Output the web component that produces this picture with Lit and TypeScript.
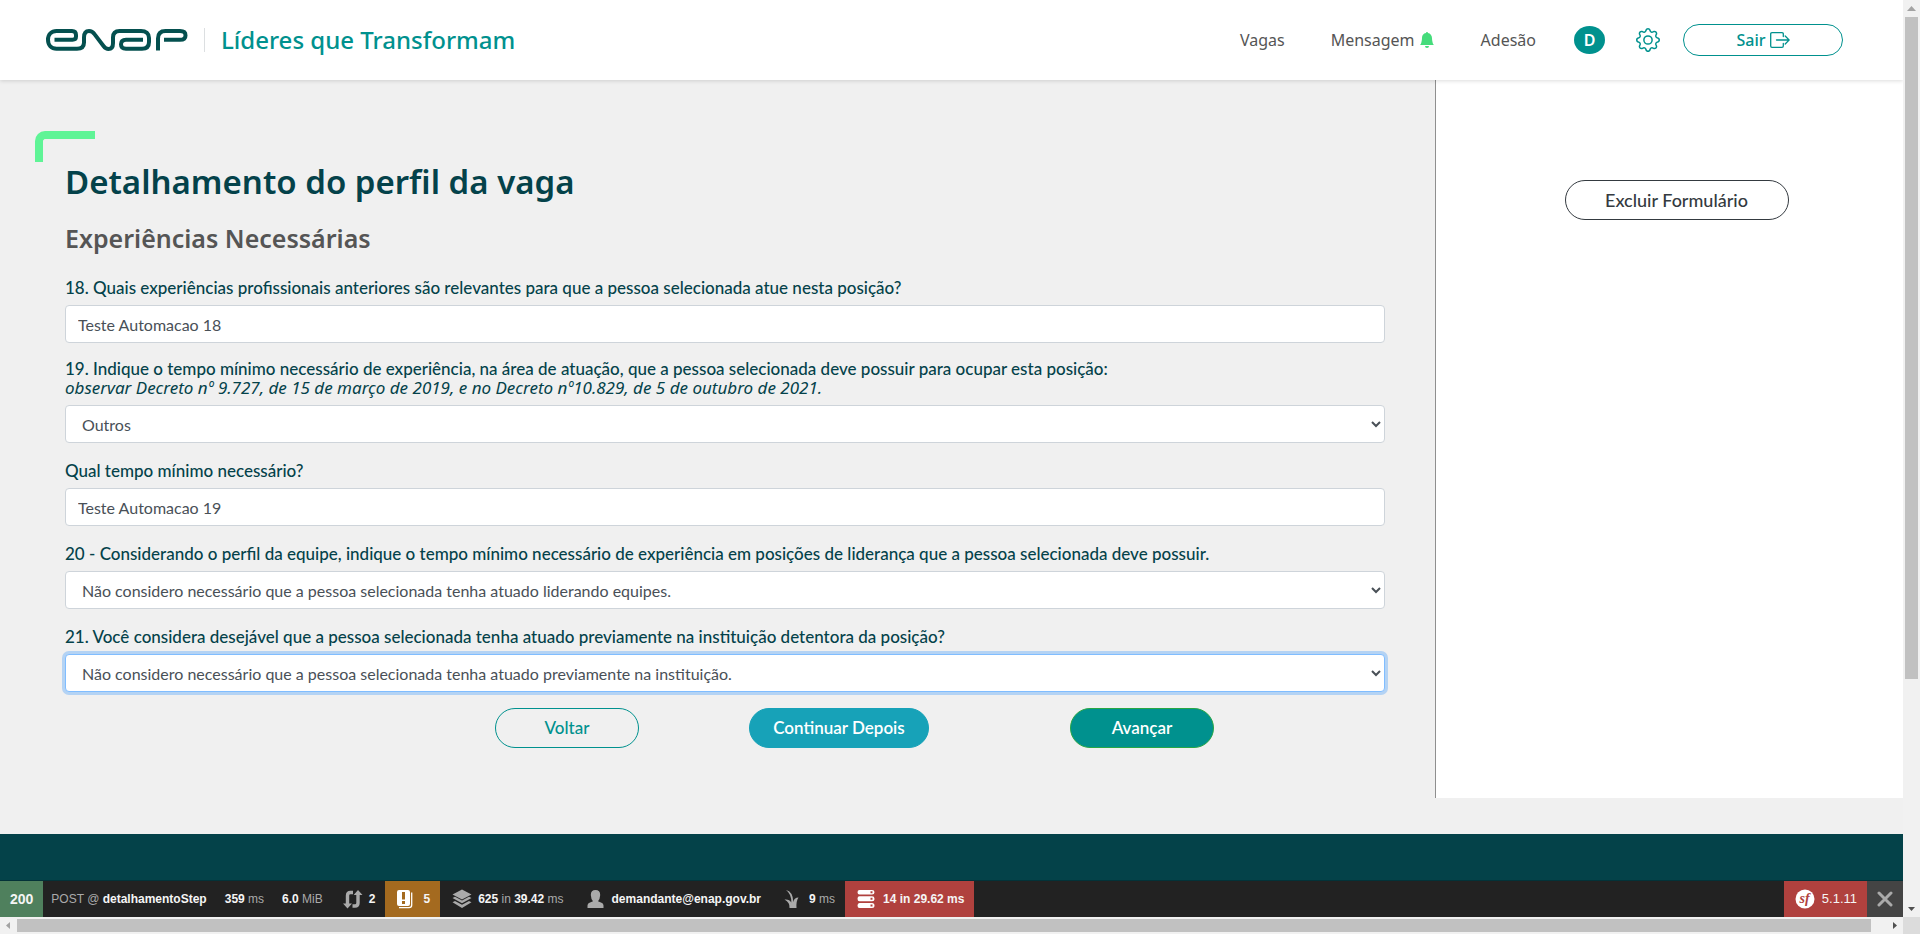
import { LitElement, html, css, svg, nothing } from "lit";
import { customElement } from "lit/decorators.js";
import { classMap } from "lit/directives/class-map.js";

interface Field {
  id: string;
  label: string;
  hint?: string;
  kind: "text" | "select";
  value: string;
  focused?: boolean;
}

const FIELDS: Field[] = [
  {
    id: "q18",
    label: "18. Quais experiências profissionais anteriores são relevantes para que a pessoa selecionada atue nesta posição?",
    kind: "text",
    value: "Teste Automacao 18",
  },
  {
    id: "q19",
    label: "19. Indique o tempo mínimo necessário de experiência, na área de atuação, que a pessoa selecionada deve possuir para ocupar esta posição:",
    hint: "observar Decreto nº 9.727, de 15 de março de 2019, e no Decreto nº10.829, de 5 de outubro de 2021.",
    kind: "select",
    value: "Outros",
  },
  { id: "q19b", label: "Qual tempo mínimo necessário?", kind: "text", value: "Teste Automacao 19" },
  {
    id: "q20",
    label: "20 - Considerando o perfil da equipe, indique o tempo mínimo necessário de experiência em posições de liderança que a pessoa selecionada deve possuir.",
    kind: "select",
    value: "Não considero necessário que a pessoa selecionada tenha atuado liderando equipes.",
  },
  {
    id: "q21",
    label: "21. Você considera desejável que a pessoa selecionada tenha atuado previamente na instituição detentora da posição?",
    kind: "select",
    value: "Não considero necessário que a pessoa selecionada tenha atuado previamente na instituição.",
    focused: true,
  },
];

@customElement("site-header")
export class SiteHeader extends LitElement {
  static styles = css`
    :host {
      display: block;
      position: relative;
      z-index: 1;
      background: #fff;
      box-shadow: 0 1px 4px rgba(0, 0, 0, 0.14);
      font-family: "Noto Sans", sans-serif;
    }
    .bar {
      display: flex;
      align-items: center;
      justify-content: space-between;
      height: 80px;
      padding: 0 60px 0 46px;
    }
    .brand,
    .nav {
      display: flex;
      align-items: center;
    }
    .brand {
      text-decoration: none;
    }
    .logo {
      display: block;
      width: 142px;
      height: 22px;
    }
    .name {
      margin-left: 16px;
      padding-left: 16px;
      border-left: 1px solid #dcdfe1;
      color: #00918e;
      font-size: 24px;
      font-weight: 500;
      line-height: 24px;
    }
    .link {
      display: flex;
      align-items: center;
      gap: 4px;
      margin-right: 46px;
      color: #555;
      font-size: 16px;
      line-height: 24px;
      text-decoration: none;
    }
    .link.last {
      margin-right: 38px;
    }
    .avatar {
      width: 31px;
      height: 28px;
      border-radius: 50%;
      background: #00918e;
      color: #fff;
      font-size: 16px;
      font-weight: 600;
      line-height: 28px;
      text-align: center;
    }
    .gear {
      display: block;
      margin: 0 23px 0 31px;
      padding: 0;
      border: 0;
      background: none;
      color: #00918e;
    }
    .icon {
      display: block;
      fill: currentColor;
    }
    .bell {
      fill: #45dc7b;
    }
    .exit {
      display: flex;
      align-items: center;
      justify-content: center;
      gap: 4px;
      width: 160px;
      height: 32px;
      padding: 0;
      border: 1px solid #00918e;
      border-radius: 16px;
      background: #fff;
      color: #00918e;
      font: 500 16px/24px "Noto Sans", sans-serif;
    }
  `;

  render() {
    return html`
      <header class="bar">
        <a class="brand" href="#">
          <svg class="logo" viewBox="0 0 142 22" fill="none" stroke="#04504f" stroke-width="4" role="img" aria-label="Enap">
            <path d="M8.500 10.700H26.500C29 10.700 30 9.500 30 7.500V6C30 3.500 28.500 2 26 2H10.500C5.500 2 2 5.500 2 10.800C2 16.200 5.500 19.700 10.500 19.700H31C35.500 19.700 38 17.500 38 13.500V8.500C38 4 40 2 43 2C45.500 2 47 3 48.500 5.200L57.500 17C59 19 60.500 20 62.500 20C65.500 20 67 18 67 14V8.500C67 4.200 69 2 73.500 2H95C100 2 103 4.500 103 9V13C103 17.500 100.500 19.700 96 19.700H80C77 19.700 75 18.200 75 15.200C75 12.200 77 10.700 80 10.700H97" />
            <path d="M112 21.500V9.500C112 4.500 114.500 2 119.500 2H134C137.500 2 139.500 3.500 139.500 6.400C139.500 9.200 137.500 10.700 134 10.700H118" />
          </svg>
          <span class="name">Líderes que Transformam</span>
        </a>
        <nav class="nav">
          <a class="link" href="#">Vagas</a>
          <a class="link" href="#">
            Mensagem
            <svg class="icon bell" width="16" height="16" viewBox="0 0 16 16" aria-hidden="true">
              <path d="M8 16a2 2 0 0 0 2-2H6a2 2 0 0 0 2 2zm.995-14.901a1 1 0 1 0-1.990 0A5.002 5.002 0 0 0 3 6c0 1.098-.5 6-2 7h14c-1.500-1-2-5.902-2-7 0-2.420-1.720-4.440-4.005-4.901z" />
            </svg>
          </a>
          <a class="link last" href="#">Adesão</a>
          <span class="avatar">D</span>
          <button class="gear" aria-label="Configurações">
            <svg class="icon" width="24" height="24" viewBox="0 0 16 16" aria-hidden="true">
              <path d="M8 4.754a3.246 3.246 0 1 0 0 6.492 3.246 3.246 0 0 0 0-6.492zM5.754 8a2.246 2.246 0 1 1 4.492 0 2.246 2.246 0 0 1-4.492 0z" />
              <path d="M9.796 1.343c-.527-1.790-3.065-1.790-3.592 0l-.094.319a.873.873 0 0 1-1.255.52l-.292-.16c-1.640-.892-3.433.902-2.540 2.541l.159.292a.873.873 0 0 1-.52 1.255l-.319.094c-1.790.527-1.790 3.065 0 3.592l.319.094a.873.873 0 0 1 .52 1.255l-.16.292c-.892 1.640.901 3.434 2.541 2.540l.292-.159a.873.873 0 0 1 1.255.52l.094.319c.527 1.790 3.065 1.790 3.592 0l.094-.319a.873.873 0 0 1 1.255-.52l.292.16c1.640.893 3.434-.902 2.540-2.541l-.159-.292a.873.873 0 0 1 .52-1.255l.319-.094c1.790-.527 1.790-3.065 0-3.592l-.319-.094a.873.873 0 0 1-.52-1.255l.16-.292c.893-1.640-.902-3.433-2.541-2.540l-.292.159a.873.873 0 0 1-1.255-.52l-.094-.319zm-2.633.283c.246-.835 1.428-.835 1.674 0l.094.319a1.873 1.873 0 0 0 2.693 1.115l.291-.16c.764-.415 1.600.42 1.184 1.185l-.159.292a1.873 1.873 0 0 0 1.116 2.692l.318.094c.835.246.835 1.428 0 1.674l-.319.094a1.873 1.873 0 0 0-1.115 2.693l.16.291c.415.764-.42 1.600-1.185 1.184l-.291-.159a1.873 1.873 0 0 0-2.693 1.116l-.094.318c-.246.835-1.428.835-1.674 0l-.094-.319a1.873 1.873 0 0 0-2.692-1.115l-.292.16c-.764.415-1.600-.42-1.184-1.185l.159-.291A1.873 1.873 0 0 0 1.945 8.930l-.319-.094c-.835-.246-.835-1.428 0-1.674l.319-.094A1.873 1.873 0 0 0 3.060 4.377l-.16-.292c-.415-.764.42-1.600 1.185-1.184l.292.159a1.873 1.873 0 0 0 2.692-1.115l.094-.319z" />
            </svg>
          </button>
          <button class="exit">
            Sair
            <svg width="20" height="16" viewBox="0 0 20 16" fill="none" stroke="currentColor" stroke-width="1.300" stroke-linecap="round" aria-hidden="true">
              <path d="M13.300 4.500V2Q13.300.7 12 .7H2Q.7.7.7 2V14Q.7 15.300 2 15.300H12Q13.300 15.300 13.300 14V11.500M6.500 8H19M15.200 4L19.200 8L15.200 12" />
            </svg>
          </button>
        </nav>
      </header>
    `;
  }
}

@customElement("profile-form")
export class ProfileForm extends LitElement {
  static styles = css`
    :host {
      display: block;
      font-family: Lato, sans-serif;
    }
    .page {
      display: grid;
      grid-template-columns: 1435fr 468fr;
    }
    .main {
      padding: 51px 50px 50px 35px;
    }
    .corner {
      box-sizing: border-box;
      width: 60px;
      height: 31px;
      border: solid #5ff496;
      border-width: 8px 0 0 8px;
      border-top-left-radius: 10px;
    }
    .form {
      padding-left: 30px;
    }
    .title,
    .subtitle {
      margin: 0;
      font-family: "Noto Sans", sans-serif;
    }
    .title {
      color: #04424a;
      font-size: 33px;
      font-weight: 600;
      line-height: 40px;
    }
    .subtitle {
      margin: 20px 0 24px;
      color: #555;
      font-size: 25px;
      font-weight: 600;
      line-height: 32px;
    }
    .field {
      margin-bottom: 18px;
    }
    .field.first,
    .field.final {
      margin-bottom: 16px;
    }
    .label {
      display: block;
      margin-bottom: 8px;
      color: #04424a;
      font-size: 17px;
      font-weight: 500;
      line-height: 19px;
    }
    .hint {
      display: block;
      font-family: "Noto Sans", sans-serif;
      font-weight: 400;
    }
    .control {
      display: block;
      box-sizing: border-box;
      width: 100%;
      height: 38px;
      padding: 6px 12px;
      border: 1px solid #ced4da;
      border-radius: 4px;
      outline: 0;
      background: #fff;
      color: #495057;
      font: 16px/24px Lato, sans-serif;
    }
    .control.focused {
      border-color: #80bdff;
      box-shadow: 0 0 0 3px rgba(0, 123, 255, 0.25);
    }
    select.control {
      padding-right: 0;
    }
    .actions {
      display: grid;
      grid-template-columns: 430fr 254fr 321fr 315fr;
      justify-items: start;
    }
    .button {
      box-sizing: border-box;
      height: 40px;
      padding: 0;
      border: 1px solid;
      border-radius: 20px;
      font: 500 17px/24px Lato, sans-serif;
    }
    .back {
      grid-column: 2;
      width: 144px;
      border-color: #00918e;
      background: transparent;
      color: #00918e;
    }
    .later {
      width: 180px;
      border-color: #17a2b8;
      background: #17a2b8;
      color: #fff;
      font-weight: 600;
    }
    .next {
      width: 144px;
      border-color: #28a745;
      background: #00918e;
      color: #fff;
      font-weight: 600;
    }
    .aside {
      padding: 100px 0 0 14px;
      border-left: 1px solid #8f8f8f;
      background: #fff;
      text-align: center;
    }
    .delete {
      width: 224px;
      border-color: #343a40;
      background: #fff;
      color: #343a40;
      font-size: 18px;
    }
  `;

  private renderField(f: Field, i: number) {
    const control = { control: true, focused: !!f.focused };
    const row = { field: true, first: i === 0, final: i === FIELDS.length - 1 };
    return html`
      <div class=${classMap(row)}>
        <label class="label" for=${f.id}>${f.label}${f.hint ? html`<em class="hint">${f.hint}</em>` : nothing}</label>
        ${f.kind === "text"
          ? html`<input class=${classMap(control)} id=${f.id} type="text" .value=${f.value} />`
          : html`<select class=${classMap(control)} id=${f.id}><option>${f.value}</option></select>`}
      </div>
    `;
  }

  render() {
    return html`
      <div class="page">
        <main class="main">
          <div class="corner"></div>
          <form class="form" @submit=${(e: Event) => e.preventDefault()}>
            <h1 class="title">Detalhamento do perfil da vaga</h1>
            <h2 class="subtitle">Experiências Necessárias</h2>
            ${FIELDS.map((f, i) => this.renderField(f, i))}
            <div class="actions">
              <button class="button back" type="button">Voltar</button>
              <button class="button later" type="button">Continuar Depois</button>
              <button class="button next" type="submit">Avançar</button>
            </div>
          </form>
        </main>
        <aside class="aside">
          <button class="button delete" type="button">Excluir Formulário</button>
        </aside>
      </div>
    `;
  }
}

const ICONS = {
  redirect: svg`<path d="M6.500 17V8.500Q6.500 5.500 9.500 5.500H12M17 7V16Q17 19 14 19H11.500" fill="none" stroke="currentColor" stroke-width="3.400"/><path d="M2 16.500H11L6.500 21.500zM12.700 8H21.500L17 3z"/>`,
  deprecation: svg`<path fill-rule="evenodd" d="M4 3H13Q15 3 15 5V17Q15 19 13 19H4Q2 19 2 17V5Q2 3 4 3zM7 5V12.500H10V5zM7 14V17H10V14z"/><path d="M16.700 5.500V18Q16.700 20.600 14 20.600H4" fill="none" stroke="currentColor" stroke-width="1.300"/>`,
  layers: svg`<path d="M12 2.500L21.500 7.500L12 12.500L2.500 7.500zM2.500 11L5 9.700L12 13.400L19 9.700L21.500 11L12 16.200zM2.500 15.300L5 14L12 17.700L19 14L21.500 15.300L12 21z"/>`,
  user: svg`<path d="M3.500 21V18.500Q3.500 16.500 5.500 15.700L9 14.300Q7 12 6.800 8Q6.800 3 11.500 3Q16.200 3 16.200 8Q16 12 14 14.300L17.500 15.700Q19.500 16.500 19.500 18.500V21z"/>`,
  grass: svg`<path d="M5 3Q12 4.500 12.300 15Q13 10.500 17.500 10.500Q15 14 15.500 21H8.500Q9.200 15.500 3.500 12.500Q8.500 12 10.300 15.500Q10.500 7 5 3z"/>`,
  database: svg`<path fill-rule="evenodd" d="M4.500 3H17Q19.500 3 19.500 5.300Q19.500 7.600 17 7.600H4.500Q2.500 7.600 2.500 5.300Q2.500 3 4.500 3zM15.500 4.300V6.300H17.500V4.300zM4.500 9.300H17Q19.500 9.300 19.500 11.700Q19.500 14.200 17 14.200H4.500Q2.500 14.200 2.500 11.700Q2.500 9.300 4.500 9.300zM15.500 10.700V12.700H17.500V10.700zM4.500 16H17Q19.500 16 19.500 18.500Q19.500 21 17 21H4.500Q2.500 21 2.500 18.500Q2.500 16 4.500 16zM15.500 17.500V19.500H17.500V17.500z"/>`,
};

@customElement("debug-toolbar")
export class DebugToolbar extends LitElement {
  static styles = css`
    :host {
      display: block;
      border-top: 1px solid #033238;
      background: #222;
      color: #f5f5f5;
      font: 12px/36px "Liberation Sans", sans-serif;
    }
    .bar {
      display: flex;
      height: 36px;
    }
    .block {
      display: flex;
      align-items: center;
      gap: 4px;
      padding: 0 10px;
      color: inherit;
      font-weight: 700;
      text-decoration: none;
      white-space: nowrap;
    }
    .tight {
      padding: 0 8px;
    }
    .status {
      background: #4f805d;
      font-size: 14px;
    }
    .warning {
      background: #a46a1f;
    }
    .error {
      background: #b0413e;
    }
    .version {
      margin-left: auto;
      font-size: 13px;
      font-weight: 400;
    }
    .muted {
      color: #aaa;
      font-weight: 400;
    }
    .icon {
      width: 24px;
      height: 24px;
      fill: currentColor;
      color: #aaa;
    }
    .icon.white {
      color: #fff;
    }
    .mark {
      fill: #b0413e;
      font: italic 700 14px "Liberation Serif", serif;
    }
    .close {
      width: 36px;
      padding: 0;
      border: 0;
      background: #444;
    }
    .cross {
      display: block;
      margin: auto;
    }
  `;

  private icon(name: keyof typeof ICONS, white = false) {
    return html`<svg class=${classMap({ icon: true, white })} viewBox="0 0 24 24" aria-hidden="true">${ICONS[name]}</svg>`;
  }

  render() {
    return html`
      <div class="bar">
        <a class="block status" href="#">200</a>
        <a class="block tight" href="#"><span><span class="muted">POST @</span> detalhamentoStep</span></a>
        <a class="block" href="#"><span>359 <span class="muted">ms</span></span></a>
        <a class="block tight" href="#"><span>6.0 <span class="muted">MiB</span></span></a>
        <a class="block" href="#">${this.icon("redirect")}<span>2</span></a>
        <a class="block warning" href="#">${this.icon("deprecation", true)}<span>5</span></a>
        <a class="block" href="#">${this.icon("layers")}<span>625 <span class="muted">in</span> 39.42 <span class="muted">ms</span></span></a>
        <a class="block" href="#">${this.icon("user")}<span>demandante@enap.gov.br</span></a>
        <a class="block" href="#">${this.icon("grass")}<span>9 <span class="muted">ms</span></span></a>
        <a class="block error" href="#">${this.icon("database", true)}<span>14 in 29.62 ms</span></a>
        <a class="block error version" href="#">
          <svg class="icon white" viewBox="0 0 24 24" aria-hidden="true">
            <circle cx="11" cy="12" r="9.500" />
            <text class="mark" x="10.500" y="16" text-anchor="middle">sf</text>
          </svg>
          <span>5.1.11</span>
        </a>
        <button class="close" aria-label="Fechar">
          <svg class="cross" width="16" height="16" viewBox="0 0 16 16" stroke="#aaa" stroke-width="3" stroke-linecap="round" aria-hidden="true">
            <path d="M2 2L14 14M14 2L2 14" />
          </svg>
        </button>
      </div>
    `;
  }
}

@customElement("app-root")
export class AppRoot extends LitElement {
  static styles = css`
    :host {
      display: grid;
      grid-template: minmax(0, 1fr) 17px / minmax(0, 1fr) 17px;
      height: 100vh;
      background: #f0f0f0;
    }
    .view {
      display: flex;
      flex-direction: column;
      min-height: 0;
      overflow: hidden;
    }
    .footer {
      flex: 1;
      margin-top: 36px;
      background: #044249;
    }
    .track {
      display: flex;
      align-items: center;
      background: #f1f1f1;
    }
    .vertical {
      flex-direction: column;
    }
    .cap {
      display: block;
      flex: none;
      width: 17px;
      height: 17px;
      fill: #505050;
    }
    .cap.off {
      fill: #a3a3a3;
    }
    .rail {
      display: flex;
      flex: 1;
      align-self: stretch;
      padding: 2px 0;
    }
    .vertical .rail {
      flex-direction: column;
      padding: 0 2px;
    }
    .thumb {
      flex: 124 0 0;
      background: #c1c1c1;
    }
    .vertical .thumb {
      flex: 3 0 0;
    }
    .rest {
      flex: 1 0 0;
    }
    .join {
      background: #dcdcdc;
    }
  `;

  render() {
    return html`
      <div class="view">
        <site-header></site-header>
        <profile-form></profile-form>
        <footer class="footer"></footer>
        <debug-toolbar></debug-toolbar>
      </div>
      <div class="track vertical" aria-hidden="true">
        <svg class="cap off" viewBox="0 0 17 17"><path d="M4 11L8.500 6L13 11z" /></svg>
        <div class="rail"><div class="thumb"></div><div class="rest"></div></div>
        <svg class="cap" viewBox="0 0 17 17"><path d="M5 7L8.500 11L12 7z" /></svg>
      </div>
      <div class="track horizontal" aria-hidden="true">
        <svg class="cap off" viewBox="0 0 17 17"><path d="M10 5L6 8.500L10 12z" /></svg>
        <div class="rail"><div class="thumb"></div><div class="rest"></div></div>
        <svg class="cap" viewBox="0 0 17 17"><path d="M7 5L11 8.500L7 12z" /></svg>
      </div>
      <div class="join"></div>
    `;
  }
}
